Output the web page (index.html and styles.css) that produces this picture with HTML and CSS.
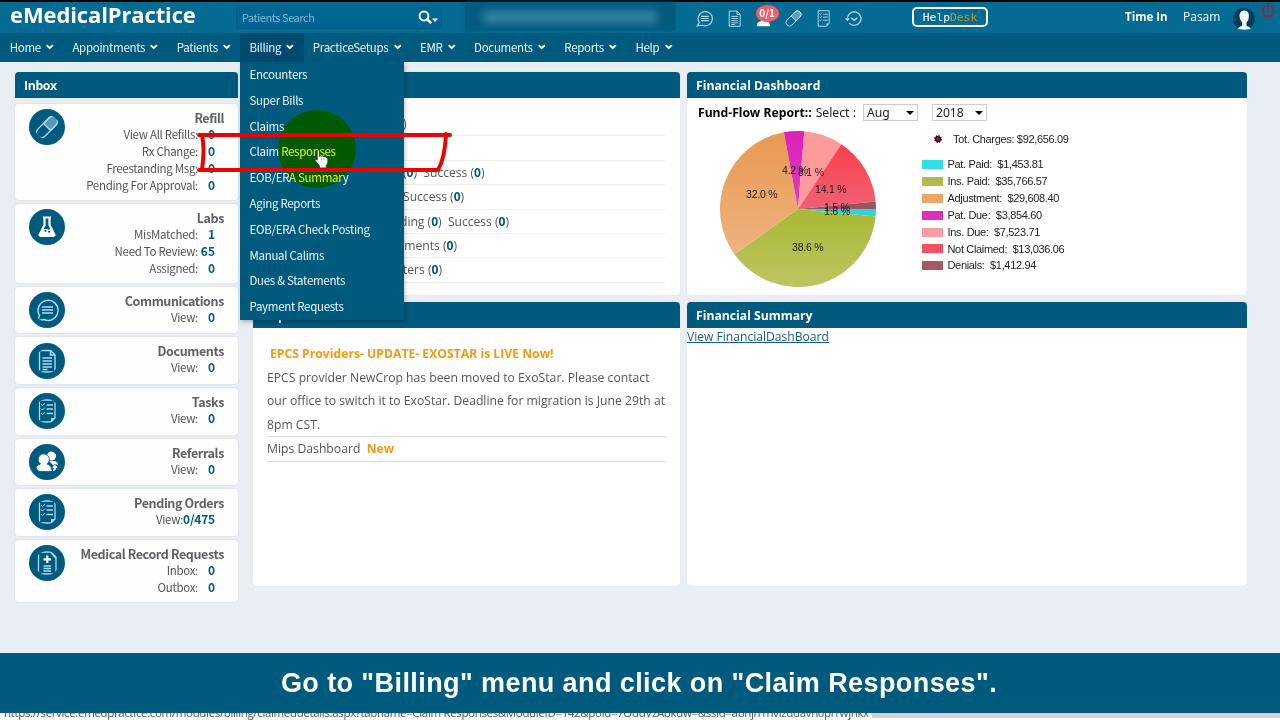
FILE: index.html
```html
<!DOCTYPE html>
<html>
<head>
<meta charset="UTF-8">
<title>eMedicalPractice</title>
<link rel="stylesheet" href="styles.css">
</head>
<body>

<svg class="defs" width="0" height="0">
	<symbol id="chev" viewBox="0 0 10 8"><path d="M1.8 2l3.2 3.2L8.2 2" fill="none" stroke="#fff" stroke-width="2.1"/></symbol>
	<symbol id="pill" viewBox="0 0 24 24">
		<g transform="rotate(-45 12 12)" fill="none" stroke="currentColor" stroke-width="1.3">
			<rect x="-1" y="7" width="26" height="10" rx="5"/>
			<path d="M12 7h8a5 5 0 0 1 0 10h-8z" fill="currentColor" fill-opacity=".5"/>
		</g>
	</symbol>
	<symbol id="chat" viewBox="0 0 24 24">
		<path d="M4.5 17.5A10 10 0 1 1 9 21.5L1.5 22.5Q4 20.5 4.5 17.5z" fill="none" stroke="currentColor" stroke-width="1.5"/>
		<path d="M7 9h11M7 12h11M7 15h11" stroke="currentColor" stroke-width="1.5"/>
	</symbol>
	<symbol id="doc" viewBox="0 0 24 24">
		<path d="M4.5 1.5h11l4.5 4.5v17h-15.5zM15.5 1.5v4.5h4.5" fill="none" stroke="currentColor" stroke-width="1.4"/>
		<path d="M7.5 9h9.5M7.5 12h9.5M7.5 15h9.5M7.5 18h9.5M7.5 20.5h5" stroke="currentColor" stroke-width="1.3"/>
	</symbol>
	<symbol id="list" viewBox="0 0 24 24">
		<path d="M4.5 1h15.5v18l-4 4h-11.5z" fill="none" stroke="currentColor" stroke-width="1.3"/>
		<path d="M20 19h-4v4z" fill="currentColor"/>
		<path d="M6 5l1.5 1.5L10 4M6 9.5L7.5 11 10 8.500M6 14l1.5 1.5L10 13" fill="none" stroke="currentColor"/>
		<path d="M11.5 6h6.5M11.5 10h6.5M11.5 14.5h6.5" stroke="currentColor" stroke-width="1.3"/>
	</symbol>
	<symbol id="flask" viewBox="0 0 24 24">
		<path d="M8 2.5h8M9.5 3v7L4 21h16L14.5 10V3" fill="none" stroke="#fff" stroke-width="2.2" stroke-linejoin="round"/>
		<path d="M7.5 14h9l4 8h-17z" fill="#fff"/>
		<circle cx="10.5" cy="15.8" r="1.1" fill="#005a7d"/><circle cx="13.5" cy="13.8" r="1" fill="#005a7d"/><circle cx="14" cy="16.8" r="1" fill="#005a7d"/>
	</symbol>
	<symbol id="people" viewBox="0 0 24 24">
		<circle cx="16.5" cy="6" r="4.5" fill="#fff"/>
		<path d="M14 11h6q3 1 3 4l-3-1-1.5 1.5z" fill="#fff"/>
		<path d="M0 21.5q0-6 5.5-7.5a5.6 5.6 0 1 1 6.5 0q5 1.5 5 7.5z" fill="#fff" stroke="#005a7d" stroke-width=".8"/>
		<path d="M18.5 21.5q2.5-1 2.5-3.5h2l-3-3.5-3 3.5h1.8q0 1-1 2z" fill="#fff"/>
	</symbol>
	<symbol id="bust" viewBox="0 0 24 24">
		<path d="M1 23q0-6 6-7l-1-7h9l-1 7q6 1 6 7z" fill="#fff"/>
	</symbol>
	<symbol id="record" viewBox="0 0 24 24">
		<path d="M3.5 1h12.5l5 5v17h-17.5zM16 1.5l5 6" fill="none" stroke="currentColor" stroke-width="1.3"/>
		<path d="M12.3 4.5v7.5M8.5 8.3h7.6" stroke="#fff" stroke-width="2.2"/>
		<path d="M8.5 15h7.6M8.5 17.5h7.6M8.5 20h7.6" stroke="currentColor" stroke-width="1.3"/>
	</symbol>
	<symbol id="history" viewBox="0 0 24 24">
		<path d="M3.5 12A9.5 9.5 0 1 1 6 18.5" fill="none" stroke="currentColor" stroke-width="1.7"/>
		<path d="M0 11.5h7L3.5 16z" fill="currentColor"/>
		<path d="M9 11l4 3.5 4.5-3.5" fill="none" stroke="currentColor" stroke-width="2"/>
	</symbol>
</svg>

<div class="topbar">
	<div class="logo">eMedicalPractice</div>
	<div class="search">
		<span>Patients Search</span>
		<svg width="21" height="15" viewBox="0 0 21 15"><circle cx="6" cy="6" r="4.4" fill="none" stroke="#fff" stroke-width="2"/><path d="M9 9l4.3 4.3" stroke="#fff" stroke-width="2.6"/><path d="M14 8.500h6l-3 3.500z" fill="#fff"/></svg>
	</div>
	<div class="practice"><i></i></div>
	<div class="tools">
		<svg><use href="#chat"/></svg>
		<svg><use href="#doc"/></svg>
		<span class="alert"><svg><use href="#bust"/></svg><b>0/1</b></span>
		<svg><use href="#pill"/></svg>
		<svg><use href="#list"/></svg>
		<svg><use href="#history"/></svg>
	</div>
	<div class="helpdesk">Help<span>Desk</span></div>
	<div class="timein">Time In</div>
	<div class="user">Pasam</div>
	<svg class="avatar" viewBox="0 0 22 22"><circle cx="11" cy="11" r="11" fill="#003f5c"/><path d="M5 21q0-2 4-3v-3.5Q6 11 6.5 6.5 7.500 2.5 11.5 2.5 16 3 16 8q0 4-2.5 6.5V18q4 1 4 3-6 1.5-12.5 0z" fill="#eef3f6"/></svg>
	<svg class="power" viewBox="0 0 14 15"><path d="M4 3.5a5.5 5.5 0 1 0 6 0M7 0v7" fill="none" stroke="#a01c35" stroke-width="1.8"/></svg>
</div>

<div class="nav">
	<a>Home <svg><use href="#chev"/></svg></a>
	<a>Appointments <svg><use href="#chev"/></svg></a>
	<a>Patients <svg><use href="#chev"/></svg></a>
	<a class="open">Billing <svg><use href="#chev"/></svg></a>
	<a>PracticeSetups <svg><use href="#chev"/></svg></a>
	<a>EMR <svg><use href="#chev"/></svg></a>
	<a>Documents <svg><use href="#chev"/></svg></a>
	<a>Reports <svg><use href="#chev"/></svg></a>
	<a>Help <svg><use href="#chev"/></svg></a>
</div>

<div class="main">
	<div class="inbox">
		<h2>Inbox</h2>
		<div class="card"><svg class="ico"><use href="#pill"/></svg>
			<h3>Refill</h3>
			<p>View All Refills:<b>0</b></p>
			<p>Rx Change:<b>0</b></p>
			<p>Freestanding Msg:<b>0</b></p>
			<p>Pending For Approval:<b>0</b></p>
		</div>
		<div class="card"><svg class="ico"><use href="#flask"/></svg>
			<h3>Labs</h3>
			<p>MisMatched:<b>1</b></p>
			<p>Need To Review:<b>65</b></p>
			<p>Assigned:<b>0</b></p>
		</div>
		<div class="card"><svg class="ico"><use href="#chat"/></svg>
			<h3>Communications</h3>
			<p>View:<b>0</b></p>
		</div>
		<div class="card"><svg class="ico"><use href="#doc"/></svg>
			<h3>Documents</h3>
			<p>View:<b>0</b></p>
		</div>
		<div class="card"><svg class="ico"><use href="#list"/></svg>
			<h3>Tasks</h3>
			<p>View:<b>0</b></p>
		</div>
		<div class="card"><svg class="ico"><use href="#people"/></svg>
			<h3>Referrals</h3>
			<p>View:<b>0</b></p>
		</div>
		<div class="card"><svg class="ico"><use href="#list"/></svg>
			<h3>Pending Orders</h3>
			<p class="wide">View:<b>0/475</b></p>
		</div>
		<div class="card"><svg class="ico"><use href="#record"/></svg>
			<h3>Medical Record Requests</h3>
			<p>Inbox:<b>0</b></p>
			<p>Outbox:<b>0</b></p>
		</div>
	</div>

	<div class="panels">
		<div class="panel">
			<h2></h2>
			<ul class="counts">
				<li>)</li>
				<li></li>
				<li>(<b>0</b>) &nbsp;Success (<b>0</b>)</li>
				<li>Success (<b>0</b>)</li>
				<li class="cut">ding (<b>0</b>) &nbsp;Success (<b>0</b>)</li>
				<li class="cut">tments (<b>0</b>)</li>
				<li>ters (<b>0</b>)</li>
			</ul>
		</div>
		<div class="panel">
			<h2>Financial Dashboard</h2>
			<div class="report">
				<b>Fund-Flow Report::</b> <span>Select :</span>
				<span class="select">Aug</span>
				<span class="select year">2018</span>
			</div>
			<div class="chart">
				<svg class="pie" viewBox="0 0 156 156">
					<defs>
						<linearGradient id="gIns" x2="0" y2="1"><stop stop-color="#a8b836"/><stop offset="1" stop-color="#bec562"/></linearGradient>
						<linearGradient id="gAdj" x2="0" y2="1"><stop stop-color="#e89a51"/><stop offset="1" stop-color="#efb27f"/></linearGradient>
						<linearGradient id="gNot" x2="0" y2="1"><stop stop-color="#fb3f4b"/><stop offset="1" stop-color="#ee6274"/></linearGradient>
						<linearGradient id="gPat" x2="0" y2="1"><stop stop-color="#df20b5"/><stop offset="1" stop-color="#d840be"/></linearGradient>
					</defs>
					<path d="M78 78L156 78A78 78 0 0 1 155.6 85.6z" fill="#29d5df"/>
					<path d="M78 78L155.6 85.6A78 78 0 0 1 14.4 123.2z" fill="url(#gIns)"/>
					<path d="M78 78L14.4 123.2A78 78 0 0 1 63.9 1.3z" fill="url(#gAdj)"/>
					<path d="M78 78L63.9 1.3A78 78 0 0 1 84.3 .25z" fill="url(#gPat)"/>
					<path d="M78 78L84.3 .25A78 78 0 0 1 121.4 13.2z" fill="#fd9a9b"/>
					<path d="M78 78L121.4 13.2A78 78 0 0 1 155.6 70.5z" fill="url(#gNot)"/>
					<path d="M78 78L155.6 70.5A78 78 0 0 1 156 78z" fill="#9c545c"/>
					<text x="26" y="67">32.0 %</text>
					<text x="62" y="43">4.2 %</text>
					<text x="78" y="44.5">8.1 %</text>
					<text x="95" y="61.5">14.1 %</text>
					<text x="104" y="80">1.5 %</text>
					<text x="104" y="83.5">1.6 %</text>
					<text x="72" y="119.5">38.6 %</text>
				</svg>
				<div class="legend">
					<div class="total"><svg viewBox="0 0 10 10"><circle cx="5" cy="5" r="3" fill="#111" stroke="#111" stroke-width="1.8" stroke-dasharray="1.3 1.05"/><circle cx="5" cy="5" r="1.8" fill="#c8102e"/></svg>Tot. Charges: $92,656.09</div>
					<div><i class="c1"></i>Pat. Paid: &nbsp;$1,453.81</div>
					<div><i class="c2"></i>Ins. Paid: &nbsp;$35,766.57</div>
					<div><i class="c3"></i>Adjustment: &nbsp;$29,608.40</div>
					<div><i class="c4"></i>Pat. Due: &nbsp;$3,854.60</div>
					<div><i class="c5"></i>Ins. Due: &nbsp;$7,523.71</div>
					<div><i class="c6"></i>Not Claimed: &nbsp;$13,036.06</div>
					<div><i class="c7"></i>Denials: &nbsp;$1,412.94</div>
				</div>
			</div>
		</div>
		<div class="panel">
			<h2>Important</h2>
			<div class="news">
				<h4>EPCS Providers- UPDATE- EXOSTAR is LIVE Now!</h4>
				<p>EPCS provider NewCrop has been moved to ExoStar. Please contact<br>our office to switch it to ExoStar. Deadline for migration is June 29th at<br>8pm CST.</p>
				<p>Mips Dashboard &nbsp;<b>New</b></p>
			</div>
		</div>
		<div class="panel">
			<h2>Financial Summary</h2>
			<a class="more">View FinancialDashBoard</a>
		</div>
	</div>
</div>

<div class="menu">
	<a>Encounters</a>
	<a>Super Bills</a>
	<a>Claims</a>
	<a>Claim Responses</a>
	<a>EOB/ERA Summary</a>
	<a>Aging Reports</a>
	<a>EOB/ERA Check Posting</a>
	<a>Manual Calims</a>
	<a>Dues &amp; Statements</a>
	<a>Payment Requests</a>
</div>

<div class="spot"></div>
<svg class="mark" viewBox="0 0 260 50">
	<path d="M3 9L254 9M6 9Q9 22 6 44M3 44L242 44Q249 32 250 8" fill="none" stroke="#ea0303" stroke-width="4" stroke-linecap="round" stroke-linejoin="round"/>
</svg>
<svg class="hand" viewBox="0 0 14 19"><path d="M3 1.5Q4 .3 5 1.5V7q1-1 2 0 1.2-.8 2.2.3 1.3-.6 2.1.7 1.7-.2 1.7 1.5V13l-1.5 3v2H5v-2L1 11q0-1.8 2-.8z" fill="#fff" stroke="#333" stroke-width=".8"/><path d="M7 8v3M9.3 8v3" stroke="#999" stroke-width=".6"/></svg>

<div class="caption">Go to "Billing" menu and click on "Claim Responses".</div>
<div class="status"><span>https://service.emedpractice.com/modules/billing/claimeddetails.aspx?tabname=Claim Responses&amp;ModuleID=142&amp;poid=7OddVzAbkdw=&amp;ssid=abhjh1hvlzddavh0pl1wjhkx</span></div>

</body>
</html>
```

FILE: styles.css
```css
* {
	box-sizing: border-box;
}
body {
	margin: 0;
	width: 1280px;
	height: 720px;
	overflow: hidden;
	position: relative;
	background: #e9edf4;
	font-family: "Noto Sans CJK SC", sans-serif;
	font-size: 11.5px;
	letter-spacing: -.3px;
	color: #555;
	display: flex;
	flex-direction: column;
}
h2, h3, h4, p, ul {
	margin: 0;
	padding: 0;
}
.defs {
	position: absolute;
}

/* top bar */
.topbar {
	height: 33px;
	flex: none;
	border-top: 2px solid #000;
	background: #056b92;
	display: flex;
	align-items: flex-start;
	color: #fff;
	letter-spacing: 0;
}
.logo {
	width: 226px;
	margin-left: 10px;
	font: bold 22px/25px "Open Sans", sans-serif;
	letter-spacing: -.12px;
}
.search {
	width: 206px;
	height: 22px;
	margin-top: 5px;
	padding: 0 2px 2px 5px;
	border: 1px solid #085c80;
	border-radius: 2px;
	background: #006593;
	display: flex;
	align-items: center;
	justify-content: space-between;
	font-size: 11px;
	letter-spacing: -.45px;
	color: #7fb8d0;
}
.practice {
	width: 210px;
	height: 28px;
	margin-left: 23px;
	padding: 9px 18px;
	background: #005b7e;
	box-shadow: 0 0 4px #005b7e;
}
.practice i {
	display: block;
	height: 12px;
	background: #3a86a6;
	filter: blur(5px);
}
.tools {
	width: 166px;
	margin: 8px 0 0 21px;
	display: flex;
	justify-content: space-between;
	color: #b4dcf0;
}
.tools svg {
	width: 17px;
	height: 17px;
}
.alert {
	position: relative;
}
.alert b {
	position: absolute;
	left: 0;
	top: -5px;
	width: 23px;
	height: 17px;
	border-radius: 50%;
	background: #ee5f66;
	color: #fff;
	font-size: 10px;
	line-height: 16px;
	text-align: center;
}
.helpdesk {
	width: 76px;
	height: 20px;
	margin: 5px 0 0 50px;
	border: 2px solid #fff;
	border-radius: 5px;
	font: 11.3px/17px "DejaVu Sans Mono", monospace;
	text-align: center;
}
.helpdesk span {
	color: #c09a2c;
}
.timein {
	width: 58px;
	margin: 6px 0 0 137px;
	font: bold 11.5px/18px "Open Sans", sans-serif;
}
.user {
	width: 50px;
	margin-top: 6px;
	font: 12px/18px "Open Sans", sans-serif;
}
.avatar {
	width: 22px;
	height: 22px;
	margin-top: 6px;
}
.power {
	width: 14px;
	height: 15px;
	margin: 1px 0 0 6px;
}

/* navigation */
.nav {
	height: 29px;
	flex: none;
	padding-left: .5px;
	background: #005a7d;
	display: flex;
}
.nav a {
	height: 28px;
	padding: 0 8.7px 0 9.2px;
	line-height: 28px;
	color: #e9f6fb;
	white-space: nowrap;
	display: flex;
	align-items: center;
	gap: 4.2px;
}
.nav svg {
	width: 9.5px;
	height: 8px;
}
.nav .open {
	height: 29px;
	padding-bottom: 1px;
	background: #00496f;
}
.menu {
	position: absolute;
	left: 240px;
	top: 62px;
	width: 164px;
	height: 258px;
	background: #005a7d;
	box-shadow: 1px 2px 4px rgba(0, 0, 0, .25);
}
.menu a {
	display: block;
	height: 25.8px;
	padding-left: 9.5px;
	line-height: 24px;
	color: #e9f6fb;
}

/* content */
.main {
	padding: 10px 0 0 15px;
	display: flex;
	gap: 15px;
}
h2 {
	height: 26px;
	padding-left: 9px;
	border-radius: 4px 4px 0 0;
	background: #005a7d;
	color: #fff;
	font: bold 12.2px/27px "Open Sans", sans-serif;
}
.inbox {
	width: 223px;
	display: flex;
	flex-direction: column;
	gap: 4px;
}
.inbox h2 {
	margin-bottom: 2px;
}
.card {
	position: relative;
	min-height: 46.6px;
	padding: 5px 14px 6.2px 0;
	border-radius: 4px;
	background: #fefefe;
	box-shadow: 0 0 2px rgba(0, 0, 0, .12);
	text-align: right;
}
.ico {
	position: absolute;
	left: 14px;
	top: 5.3px;
	width: 36px;
	height: 36px;
	padding: 6px;
	border-radius: 50%;
	background: #005a7d;
	color: #a9dcf6;
}
h3 {
	font-size: 12.5px;
	line-height: 17px;
	letter-spacing: -.38px;
	color: #5d6064;
}
.card p {
	line-height: 16.9px;
	display: flex;
	justify-content: flex-end;
}
.card b {
	width: 26px;
	padding-right: 9px;
	color: #005a7d;
	font-size: 12px;
	letter-spacing: 0;
}
.card .wide b {
	width: auto;
	letter-spacing: -.2px;
}
.panels {
	display: grid;
	grid-template-columns: 427px 560px;
	grid-template-rows: 223px 284px;
	gap: 7px;
	letter-spacing: 0;
}
.panel {
	border-radius: 4px;
	background: #fff;
	box-shadow: 0 0 1px rgba(0, 0, 0, .15);
	font: 12.1px "Open Sans", sans-serif;
}
.counts {
	list-style: none;
	margin: 14px 15px 0 14px;
}
.counts li {
	height: 24.4px;
	padding-left: 136px;
	border-bottom: 1px solid #eee;
	line-height: 24px;
	white-space: nowrap;
}
.counts .cut {
	padding-left: 133px;
}
.counts b {
	color: #005a7d;
}
.report {
	padding: 6px 0 0 11px;
	display: flex;
	align-items: center;
	font: 12.2px/17px "Noto Sans", sans-serif;
	color: #222;
}
.report b {
	margin-right: 4px;
	color: #000;
}
.select {
	position: relative;
	width: 55px;
	height: 17px;
	margin-left: 7px;
	padding-left: 3px;
	border: 1px solid #ccc;
	line-height: 15px;
}
.year {
	margin-left: 14px;
}
.select::after {
	content: "";
	position: absolute;
	right: 3px;
	top: 6px;
	border: 4px solid transparent;
	border-top-color: #000;
	border-bottom: 0;
}
.chart {
	padding: 10px 0 0 33px;
	display: flex;
}
.pie {
	width: 156px;
	height: 156px;
}
.pie text {
	font: 10.5px "Liberation Sans", sans-serif;
	letter-spacing: -.2px;
	fill: #222;
}
.legend {
	margin: -.5px 0 0 46px;
	font: 11px/16.85px "Liberation Sans", sans-serif;
	letter-spacing: -.33px;
	color: #222;
}
.legend div {
	display: flex;
	align-items: center;
}
.legend .total {
	margin: 0 0 9px 11px;
}
.total svg {
	width: 10px;
	height: 10px;
	margin-right: 10px;
}
.legend i {
	width: 21px;
	height: 9px;
	margin-right: 4.5px;
}
.c1 { background: #35dce2; }
.c2 { background: #b1bd4a; }
.c3 { background: #eba664; }
.c4 { background: #dd2fba; }
.c5 { background: #fa9da2; }
.c6 { background: #f4505f; }
.c7 { background: #a35a63; }
.news {
	padding: 14px 14px 0 14px;
	font-size: 12.2px;
}
.news h4 {
	padding-left: 3px;
	font-size: 12.2px;
	line-height: 24px;
	color: #f29a11;
}
.news p {
	border-bottom: 1px solid #ddd;
	line-height: 23.4px;
	white-space: nowrap;
}
.news b {
	color: #f29a11;
}
.more {
	line-height: 18px;
	color: #12617f;
	text-decoration: underline;
}

/* pointer and highlight over the menu */
.spot {
	position: absolute;
	left: 278px;
	top: 110px;
	width: 78px;
	height: 78px;
	border-radius: 50%;
	background: #ff0;
	mix-blend-mode: multiply;
}
.mark {
	position: absolute;
	left: 196px;
	top: 126px;
	width: 260px;
	height: 50px;
}
.hand {
	position: absolute;
	left: 314px;
	top: 149px;
	width: 15px;
	height: 20px;
}

.caption {
	position: absolute;
	left: 0;
	top: 653px;
	z-index: 2;
	width: 1278px;
	height: 60px;
	background: #005a7d;
	box-shadow: 2px 0 #005a7d;
	color: #fff;
	font: bold 27px/60px "Liberation Sans", sans-serif;
	letter-spacing: .41px;
	text-align: center;
}
.status {
	position: absolute;
	left: 0;
	top: 704px;
	width: 1280px;
	height: 14px;
	background: linear-gradient(90deg, #f7f8fa 872px, #cdd1d5 872px);
	box-shadow: 0 2px #fff;
}
.status span {
	display: block;
	padding-left: 4px;
	font: 11.5px/17px "Open Sans", sans-serif;
	letter-spacing: -.34px;
	white-space: nowrap;
}
```
